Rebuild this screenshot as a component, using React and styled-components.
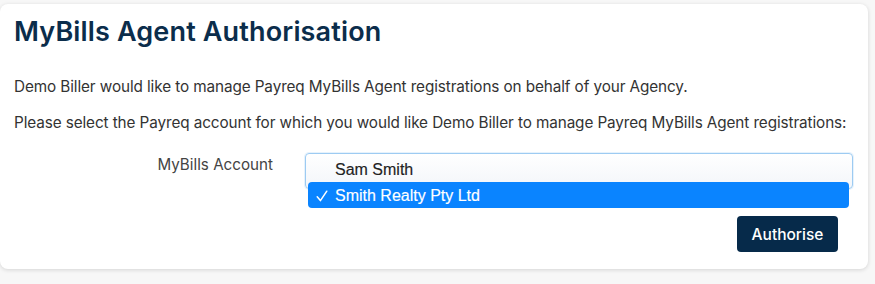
import React from 'react';
import styled, { createGlobalStyle } from 'styled-components';

const GlobalStyle = createGlobalStyle`
    html, body {
        margin: 0;
        padding: 0;
        background-color: #F7F7F7;
    }
    * {
        box-sizing: border-box;
    }
`
const Page = styled.main`
    padding: 4px 7px 16px 0;
    font-family: Inter, 'Liberation Sans', sans-serif;
`
const Card = styled.section`
    background-color: #FFFFFF;
    border-radius: 8px;
    box-shadow: 0 1px 4px rgba(0, 0, 0, 0.14);
    padding: 11px 15px 17px 14px;
    display: flex;
    flex-direction: column;
`
const Title = styled.h1`
    margin: 0;
    font-size: 27px;
    font-weight: 600;
    line-height: 34px;
    letter-spacing: 0.15px;
    color: #0B2D4B;
`
const Paragraph = styled.p`
    margin: ${({ top }) => top}px 0 0 0;
    font-size: 15.3px;
    line-height: 20px;
    color: #333333;
    letter-spacing: -0.1px;
`
const FormRow = styled.div`
    display: grid;
    grid-template-columns: 259px 1fr;
    column-gap: 32px;
    align-items: start;
    margin-top: 20px;
`
const Label = styled.label`
    text-align: right;
    font-size: 15.2px;
    line-height: 20px;
    padding-top: 2px;
    color: #444444;
`
const SelectWrap = styled.div`
    position: relative;
`
const SelectBox = styled.div`
    height: 36px;
    border: 1px solid #9DCBF2;
    border-radius: 4px;
    background: linear-gradient(#FFFFFF, #F3F6FA);
    box-shadow: 0 0 0 1px rgba(157, 203, 242, 0.25);
`
const Option = styled.div`
    display: flex;
    align-items: center;
    height: 26px;
    padding-left: ${({ selected }) => (selected ? 8 : 27)}px;
    padding-top: 1px;
    font-family: 'Liberation Sans', Arial, sans-serif;
    font-size: 16px;
    -webkit-text-stroke: 0.15px currentColor;
    color: ${({ selected }) => (selected ? '#FFFFFF' : '#222222')};
`
const Menu = styled.div`
    position: absolute;
    top: 3px;
    left: 3px;
    right: 4px;
    display: flex;
    flex-direction: column;
`
const HighlightedOption = styled(Option)`
    background-color: #0A84FF;
    border-radius: 4px;
`
const Check = styled.svg`
    width: 12px;
    height: 12px;
    margin-right: 7px;
    flex-shrink: 0;
`
const Actions = styled.div`
    display: flex;
    justify-content: flex-end;
    margin-top: 27px;
    padding-right: 15px;
`
const Button = styled.button`
    height: 36px;
    width: 101px;
    border: none;
    border-radius: 4px;
    background-color: #062A4A;
    color: #FFFFFF;
    font-family: Inter, 'Liberation Sans', sans-serif;
    font-size: 15.5px;
    font-weight: 500;
`

const accounts = ['Sam Smith', 'Smith Realty Pty Ltd'];

function CheckMark() {
    return (
        <Check viewBox="0 0 12 12">
            <path d="M1.2 6.8 L4.4 10.6 L10.8 1.2" fill="none" stroke="currentColor" strokeWidth="1.5" strokeLinecap="round" strokeLinejoin="round" />
        </Check>
    )
}

function App() {
    const selected = accounts[1];

    return (
        <Page>
            <GlobalStyle />
            <Card>
                <Title>MyBills Agent Authorisation</Title>
                <Paragraph top={28}>Demo Biller would like to manage Payreq MyBills Agent registrations on behalf of your Agency.</Paragraph>
                <Paragraph top={16}>Please select the Payreq account for which you would like Demo Biller to manage Payreq MyBills Agent registrations:</Paragraph>
                <FormRow>
                    <Label>MyBills Account</Label>
                    <SelectWrap>
                        <SelectBox />
                        <Menu>
                            {accounts.map(name => name === selected
                                ? <HighlightedOption key={name} selected><CheckMark />{name}</HighlightedOption>
                                : <Option key={name}>{name}</Option>)}
                        </Menu>
                    </SelectWrap>
                </FormRow>
                <Actions>
                    <Button>Authorise</Button>
                </Actions>
            </Card>
        </Page>
    )
}

export default App;
